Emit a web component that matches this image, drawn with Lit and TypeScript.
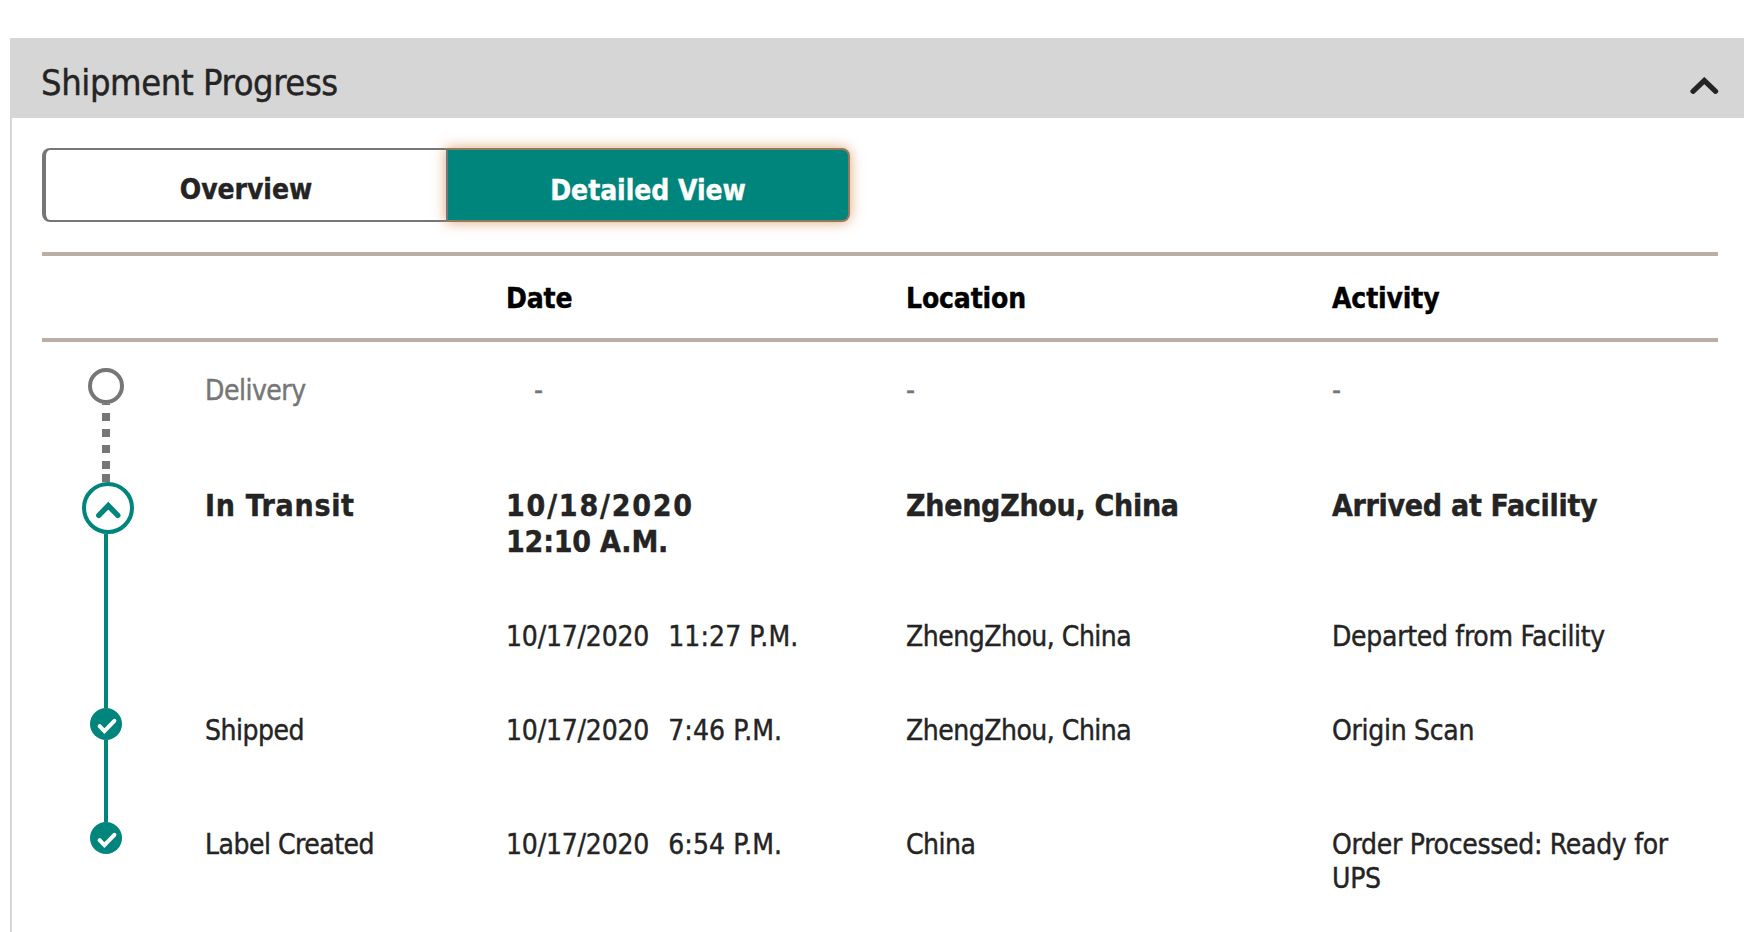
import { LitElement, html, css, svg } from "lit";
import { customElement, property, state } from "lit/decorators.js";
import { classMap } from "lit/directives/class-map.js";

type Status = "pending" | "current" | "between" | "done";

interface Activity {
  status: Status;
  last?: boolean;
  label: string;
  date: string;
  time: string;
  location: string;
  activity: string;
}

const activities: Activity[] = [
  {
    status: "pending",
    label: "Delivery",
    date: "-",
    time: "",
    location: "-",
    activity: "-",
  },
  {
    status: "current",
    label: "In Transit",
    date: "10/18/2020",
    time: "12:10 A.M.",
    location: "ZhengZhou, China",
    activity: "Arrived at Facility",
  },
  {
    status: "between",
    label: "",
    date: "10/17/2020",
    time: "11:27 P.M.",
    location: "ZhengZhou, China",
    activity: "Departed from Facility",
  },
  {
    status: "done",
    label: "Shipped",
    date: "10/17/2020",
    time: "7:46 P.M.",
    location: "ZhengZhou, China",
    activity: "Origin Scan",
  },
  {
    status: "done",
    last: true,
    label: "Label Created",
    date: "10/17/2020",
    time: "6:54 P.M.",
    location: "China",
    activity: "Order Processed: Ready for UPS",
  },
];

@customElement("progress-marker")
class ProgressMarker extends LitElement {
  static override styles = css`
    :host {
      display: flex;
      flex-direction: column;
      align-items: flex-start;
    }
    svg {
      display: block;
      flex: none;
    }
    .pending {
      margin-left: 46px;
    }
    .current {
      margin-left: 40px;
    }
    .done {
      margin-left: 48px;
    }
    .line {
      flex: 1;
      width: 4px;
      margin-left: 62px;
      background-color: #00857d;
    }
    .dots {
      margin-left: 60px;
    }
  `;
  @property({ type: String })
  public status: Status = "between";
  @property({ type: Boolean })
  public last: boolean = false;

  icon() {
    if (this.status === "pending") {
      return html`<svg class="pending" width="36" height="36">
        <circle cx="18" cy="18" r="16" fill="#fff" stroke="#767676" stroke-width="4" />
      </svg>`;
    }
    if (this.status === "current") {
      return html`<svg class="current" width="52" height="52">
        <circle cx="26" cy="26" r="24" fill="#fff" stroke="#00857d" stroke-width="4" />
        <path
          d="M16.8 33.4 L26.3 23.7 L35.8 33.4"
          fill="none"
          stroke="#00857d"
          stroke-width="5.4"
          stroke-linecap="round"
        />
      </svg>`;
    }
    if (this.status === "done") {
      return html`<svg class="done" width="32" height="32">
        <circle cx="16" cy="16" r="16" fill="#00857d" />
        <path
          d="M9.6 18.2 L14.4 23.2 L24.4 12.8"
          fill="none"
          stroke="#fff"
          stroke-width="4"
          stroke-linecap="round"
        />
      </svg>`;
    }
    return "";
  }
  connector() {
    if (this.last) {
      return "";
    }
    if (this.status === "pending") {
      return html`<svg class="dots" width="8" height="78">
        ${[-7, 9, 25, 41, 57, 70].map(
          (y) => svg`<rect x="0" y=${y} width="8" height="8" fill="#767676" />`
        )}
      </svg>`;
    }
    return html`<div class="line"></div>`;
  }
  override render() {
    return html`${this.icon()}${this.connector()}`;
  }
}

@customElement("app-root")
class AppRoot extends LitElement {
  static override styles = css`
    :host {
      display: block;
      box-sizing: border-box;
      height: 932px;
      overflow: hidden;
      padding: 38px 0 0 10px;
      background-color: #fff;
      color: #242424;
      font-family: "DejaVu Sans Condensed", "DejaVu Sans", sans-serif;
      font-stretch: condensed;
      font-size: 28px;
      line-height: 34px;
      letter-spacing: -0.5px;
      -webkit-text-stroke: 0.4px currentColor;
    }
    .panel {
      box-sizing: border-box;
      height: 894px;
      border-left: 2px solid #d6d6d6;
    }
    .header {
      box-sizing: border-box;
      display: flex;
      justify-content: space-between;
      height: 80px;
      padding: 23px 25px 0 29px;
      background-color: #d6d6d6;
    }
    .title {
      margin: 0;
      font-size: 36px;
      font-weight: normal;
      line-height: 44px;
      letter-spacing: -0.4px;
    }
    .chevron {
      margin-top: 16px;
    }
    .tabs {
      display: flex;
      padding: 30px 0 0 30px;
    }
    .tab {
      box-sizing: border-box;
      width: 404px;
      height: 74px;
      margin: 0;
      border: 2px solid #767676;
      border-left-width: 4px;
      border-right: 0;
      border-radius: 8px 0 0 8px;
      padding: 10px 0 0;
      background-color: #fff;
      color: #242424;
      font: inherit;
      font-weight: bold;
      letter-spacing: -0.05px;
    }
    .tab + .tab {
      border: 2px solid #767676;
      border-radius: 0 8px 8px 0;
    }
    .tab-selected {
      background-color: #00857d;
      color: #fff;
    }
    .tab + .tab-selected {
      border-color: #93795c;
      border-left-color: #767676;
      padding-top: 12px;
      box-shadow: 0 0 13px rgba(200, 118, 45, 0.65);
    }
    .table {
      margin: 30px 26px 0 30px;
    }
    .row {
      display: grid;
      grid-template-columns: 163px 301px 400px 426px 1fr;
    }
    .head {
      box-sizing: border-box;
      height: 90px;
      border: solid #bbaea4;
      border-width: 4px 0;
      margin-bottom: 26px;
      padding-top: 26px;
      color: #000;
      font-weight: bold;
      letter-spacing: -0.15px;
    }
    .cell {
      padding-top: 6px;
    }
    .date {
      letter-spacing: -0.2px;
    }
    .activity {
      padding-right: 30px;
      letter-spacing: -0.3px;
    }
    .pending,
    .done {
      min-height: 114px;
    }
    .pending {
      color: #767676;
    }
    .pending .date {
      padding-left: 28px;
    }
    .current {
      min-height: 134px;
      font-size: 30px;
      font-weight: bold;
      line-height: 36px;
      letter-spacing: -0.3px;
    }
    .current .cell {
      padding-top: 6px;
    }
    .current .label {
      letter-spacing: 0.7px;
    }
    .current .date {
      letter-spacing: 1.8px;
    }
    .current .time {
      display: block;
      margin-left: 0;
      letter-spacing: -0.2px;
    }
    .between {
      min-height: 92px;
    }
    .between .cell {
      padding-top: 4px;
    }
    .time {
      margin-left: 19px;
      letter-spacing: 0.1px;
    }
  `;
  @state()
  private selected = "Detailed View";

  renderRow(item: Activity) {
    return html`
      <div class="row ${item.status}">
        <progress-marker
          status=${item.status}
          ?last=${item.last}
        ></progress-marker>
        <div class="cell label">${item.label}</div>
        <div class="cell date">
          ${item.date}${item.time
            ? html`<span class="time">${item.time}</span>`
            : ""}
        </div>
        <div class="cell">${item.location}</div>
        <div class="cell activity">${item.activity}</div>
      </div>
    `;
  }
  override render() {
    return html`
      <section class="panel">
        <header class="header">
          <h2 class="title">Shipment Progress</h2>
          <svg class="chevron" width="30" height="20">
            <path
              d="M4 14.3 L15.3 3.5 L26.6 14.3"
              fill="none"
              stroke="#242424"
              stroke-width="5.2"
              stroke-linecap="round"
            />
          </svg>
        </header>
        <nav class="tabs">
          ${["Overview", "Detailed View"].map(
            (name) =>
              html`<button
                class=${classMap({
                  tab: true,
                  "tab-selected": name === this.selected,
                })}
                @click=${() => (this.selected = name)}
              >
                ${name}
              </button>`
          )}
        </nav>
        <div class="table">
          <div class="row head">
            <span></span>
            <span></span>
            <span>Date</span>
            <span>Location</span>
            <span>Activity</span>
          </div>
          ${activities.map((item) => this.renderRow(item))}
        </div>
      </section>
    `;
  }
}

declare global {
  interface HTMLElementTagNameMap {
    "app-root": AppRoot;
    "progress-marker": ProgressMarker;
  }
}
